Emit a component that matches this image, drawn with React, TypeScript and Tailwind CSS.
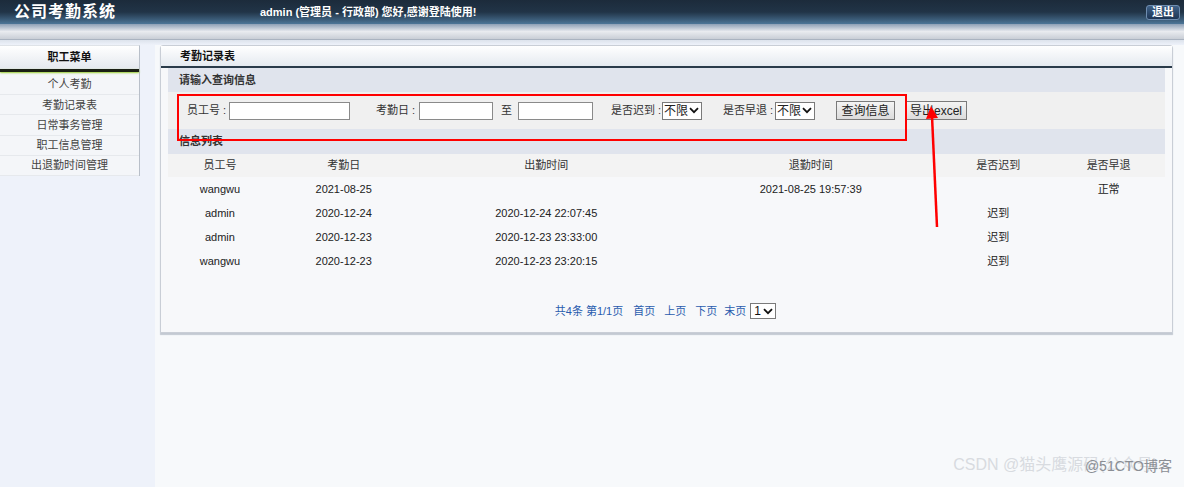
const font = { fontFamily: '"Liberation Sans", "Noto Sans CJK SC", sans-serif' };

const menu = ["个人考勤", "考勤记录表", "日常事务管理", "职工信息管理", "出退勤时间管理"];

const rows = [
  { id: "wangwu", day: "2021-08-25", on: "", off: "2021-08-25 19:57:39", late: "", early: "正常" },
  { id: "admin", day: "2020-12-24", on: "2020-12-24 22:07:45", off: "", late: "迟到", early: "" },
  { id: "admin", day: "2020-12-23", on: "2020-12-23 23:33:00", off: "", late: "迟到", early: "" },
  { id: "wangwu", day: "2020-12-23", on: "2020-12-23 23:20:15", off: "", late: "迟到", early: "" },
];

const cols = ["w-[104px]", "w-[144px]", "w-[262px]", "w-[268px]", "w-[108px]", "w-[113px]"];

function Chevron() {
  return (
    <svg className="shrink-0" width="10" height="7" viewBox="0 0 10 7">
      <path d="M1 1.2 L5 5.2 L9 1.2" fill="none" stroke="#111" strokeWidth="1.8" />
    </svg>
  );
}

function Select({ value, w }: { value: string; w: string }) {
  return (
    <div className={`${w} h-[18px] shrink-0 border border-[#7a7a7a] bg-white flex items-center justify-between pl-[1px] pr-[2px] text-[12px] text-[#222] whitespace-nowrap`}>
      <span>{value}</span>
      <Chevron />
    </div>
  );
}

export default function App() {
  return (
    <div className="w-[1184px] h-[487px] overflow-hidden relative bg-[#eef2fa] text-[12px] text-[#222]" style={font}>
      {/* header */}
      <div className="h-[24px] bg-gradient-to-b from-[#1c2b3b] via-[#213447] to-[#4c7698] flex items-center relative">
        <div className="pl-[14px] w-[260px] text-white text-[16px] font-bold tracking-[1px]">公司考勤系统</div>
        <div className="text-white text-[11px] font-bold">admin (管理员 - 行政部) 您好,感谢登陆使用!</div>
        <div className="ml-auto mr-[4px] w-[34px] h-[15px] rounded-[3px] border border-[#6f8db0] bg-gradient-to-b from-[#3f6188] to-[#1d3554] text-white text-[11px] font-bold flex items-center justify-center">
          退出
        </div>
      </div>
      <div className="h-[16px] bg-gradient-to-b from-[#8da0b6] via-[#e9ebef] to-[#c9ced6] border-b border-[#aab3c0]" />
      <div className="h-[5px] bg-gradient-to-b from-[#dde3ec] to-[#eef2fa]" />

      <div className="flex">
        {/* sidebar */}
        <div className="w-[155px] shrink-0">
          <div className="w-[140px] bg-[#f4f6f9] border-r border-[#b8bfc9] border-t border-t-[#dfe3e8]">
            <div className="h-[23px] bg-gradient-to-b from-[#ffffff] to-[#e4e8ee] flex items-center justify-center font-bold text-[11px] text-[#111]">职工菜单</div>
            <div className="h-[3px] bg-[#1a1f14] shadow-[0_1px_2px_#9acd32]" />
            <div className="h-[3px]" />
            {menu.map((m) => (
              <div key={m} className="h-[20.2px] flex items-center justify-center border-b border-[#e6e9ed] text-[11px] text-[#444]">
                {m}
              </div>
            ))}
          </div>
        </div>

        {/* main */}
        <div className="flex-1 bg-[#f7f9fb] h-[446px] pl-[5px] pt-0">
          <div className="w-[1013px] border border-[#c9ced6] rounded-t-[3px] bg-[#f7f8fa] shadow-[0_2px_1px_#c3c9d2]">
            <div className="h-[20px] bg-gradient-to-b from-[#ffffff] to-[#e5eaf0] flex items-center pl-[19px] font-bold text-[11px] text-[#111]">考勤记录表</div>
            <div className="h-[2px] bg-[#2a3b4a]" />
            <div className="px-[7px] pb-[12px]">
              <div className="h-[24px] bg-[#e0e4ed] flex items-center pl-[11px] text-[11px] font-bold text-[#333]">请输入查询信息</div>
              <div className="h-[37px] bg-[#f0f0f0] flex items-center text-[11px] text-[#333] whitespace-nowrap">
                <span className="ml-[19px] w-[42px]">员工号 :</span>
                <div className="w-[121px] h-[18px] border border-[#8a8a8a] bg-white" />
                <span className="ml-[26px] w-[43px]">考勤日 :</span>
                <div className="w-[74px] h-[18px] border border-[#8a8a8a] bg-white" />
                <span className="ml-[8px] w-[17px]">至</span>
                <div className="w-[75px] h-[18px] border border-[#8a8a8a] bg-white" />
                <span className="ml-[18px] w-[51px]">是否迟到 :</span>
                <Select value="不限" w="w-[40px]" />
                <span className="ml-[21px] w-[52px]">是否早退 :</span>
                <Select value="不限" w="w-[40px]" />
                <div className="ml-[21px] w-[59px] h-[19px] border border-[#7a7a7a] bg-gradient-to-b from-[#f4f4f4] to-[#dcdcdc] flex items-center justify-center text-[12px] text-[#222]">查询信息</div>
                <div className="ml-[10px] w-[62px] h-[19px] border border-[#7a7a7a] bg-gradient-to-b from-[#f4f4f4] to-[#dcdcdc] flex items-center justify-center text-[12px] text-[#222]">导出excel</div>
              </div>
              <div className="h-[25px] bg-[#e0e4ed] flex items-center pl-[11px] text-[11px] font-bold text-[#333]">信息列表</div>
              <div className="h-[23px] bg-[#f3f3f3] flex items-center text-[11px] text-[#333]">
                {["员工号", "考勤日", "出勤时间", "退勤时间", "是否迟到", "是否早退"].map((h, i) => (
                  <div key={h} className={`${cols[i]} text-center`}>{h}</div>
                ))}
              </div>
              {rows.map((r, k) => (
                <div key={k} className="h-[24px] flex items-center text-[11px] text-[#222]">
                  {[r.id, r.day, r.on, r.off, r.late, r.early].map((c, i) => (
                    <div key={i} className={`${cols[i]} text-center`}>{c}</div>
                  ))}
                </div>
              ))}
              <div className="h-[30px]" />
              <div className="flex items-center justify-center text-[11px] text-[#2a5cae] whitespace-nowrap pr-[2px]">
                <span>共4条 第1/1页</span>
                <span className="ml-[10px]">首页</span>
                <span className="ml-[9px]">上页</span>
                <span className="ml-[9px]">下页</span>
                <span className="ml-[7px]">末页</span>
                <div className="ml-[4px] w-[26px] h-[16px] border border-[#7a7a7a] bg-white flex items-center justify-between pl-[3px] pr-[2px] text-[12px] text-[#111]">
                  <span>1</span>
                  <Chevron />
                </div>
              </div>
            </div>
          </div>
        </div>
      </div>

      {/* red annotations */}
      <div className="absolute left-[177px] top-[94px] w-[730px] h-[47px] border-[2px] border-[#ff0000]" />
      <svg className="absolute left-0 top-0" width="1184" height="487">
        <line x1="937" y1="227" x2="932" y2="116" stroke="#ff0000" strokeWidth="2.5" />
        <path d="M931 106 L926 119 L938 118 Z" fill="#ff0000" />
      </svg>

      {/* watermark */}
      <div className="absolute right-[26px] bottom-[10px] text-[16px] text-[#d8dbe0]">CSDN @猫头鹰源码(公众号)</div>
      <div className="absolute right-[12px] bottom-[10px] text-[14px] text-[#8a8e94]">@51CTO博客</div>
    </div>
  );
}
